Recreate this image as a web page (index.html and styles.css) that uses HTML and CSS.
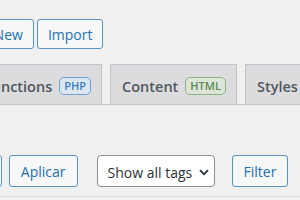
FILE: index.html
```html
<!DOCTYPE html>
<html>
<head>
<meta charset="utf-8">
<link rel="stylesheet" href="styles.css">
</head>
<body>
<div class="page">
  <div class="actions">
    <button class="btn">Add New</button>
    <button class="btn">Import</button>
  </div>
  <div class="tabs">
    <div class="tab tab-functions">Functions <span class="badge badge-php">PHP</span></div>
    <div class="tab">Content <span class="badge badge-html">HTML</span></div>
    <div class="tab">Styles <span class="badge badge-css">CSS</span></div>
  </div>
  <div class="filters">
    <button class="btn btn-tall btn-hidden">Bulk actions</button>
    <button class="btn btn-tall">Aplicar</button>
    <div class="select">Show all tags
      <svg class="chev" width="10" height="7" viewBox="0 0 10 7"><path d="M1 1.2 L5 5.2 L9 1.2" fill="none" stroke="#2c3338" stroke-width="1.8"/></svg>
    </div>
    <button class="btn btn-tall">Filter</button>
  </div>
  <div class="table-top"></div>
</div>
</body>
</html>
```

FILE: styles.css
```css
html, body {
  margin: 0;
  padding: 0;
  background: #f0f0f1;
  overflow: hidden;
}
body {
  width: 300px;
  height: 200px;
  font-family: "Open Sans", "Noto Sans", sans-serif;
}
.page {
  position: relative;
}
.actions {
  display: flex;
  gap: 5px;
  margin-top: 19px;
  margin-left: -47px;
}
.btn {
  box-sizing: border-box;
  height: 30px;
  padding: 2px 10px 0;
  border: 1px solid #5b93c4;
  border-radius: 3px;
  background: #f6f7f7;
  color: #2271b1;
  font-family: "Open Sans", "Noto Sans", sans-serif;
  font-size: 14px;
  line-height: 26px;
  white-space: nowrap;
  flex: none;
}
.actions .btn + .btn {
  margin-left: -2px;
}
.btn-tall {
  height: 32px;
  line-height: 28px;
  padding: 2px 11px 0;
}
.tabs {
  display: flex;
  gap: 8px;
  margin-top: 15px;
  margin-left: -28px;
  border-bottom: 1px solid #c3c4c7;
  height: 40px;
  align-items: flex-end;
}
.tab {
  box-sizing: border-box;
  height: 40px;
  display: flex;
  align-items: center;
  gap: 7px;
  padding: 3px 10px 0 11px;
  background: #dcdcde;
  border: 1px solid #c3c4c7;
  border-bottom: none;
  color: #50575e;
  font-size: 14.5px;
  font-weight: 600;
  white-space: nowrap;
  flex: none;
}
.badge {
  box-sizing: border-box;
  height: 18px;
  padding: 0 4px;
  border-radius: 5px;
  border: 1px solid;
  font-size: 11px;
  font-weight: 600;
  line-height: 16px;
}
.badge-php {
  color: #3a7fbf;
  border-color: #6fa3d3;
  background: #dbe6ef;
}
.badge-html {
  color: #5b8a52;
  border-color: #8eb486;
  background: #dde5d9;
}
.badge-css {
  color: #8a5aa8;
  border-color: #b190c6;
}
.filters {
  display: flex;
  align-items: center;
  margin-top: 50px;
  margin-left: -101px;
}
.btn-hidden {
  margin-right: 7px;
}
.select {
  box-sizing: border-box;
  height: 32px;
  margin-left: 19px;
  margin-right: 17px;
  width: 118px;
  padding: 2px 5px 0 10px;
  display: flex;
  align-items: center;
  justify-content: space-between;
  background: #fff;
  border: 1px solid #8c8f94;
  border-radius: 4px;
  color: #2c3338;
  font-size: 14px;
  white-space: nowrap;
  flex: none;
}
.chev {
  flex: none;
}
.table-top {
  margin-top: 9px;
  margin-left: 0;
  border-top: 1px solid #dcdcde;
}
```
